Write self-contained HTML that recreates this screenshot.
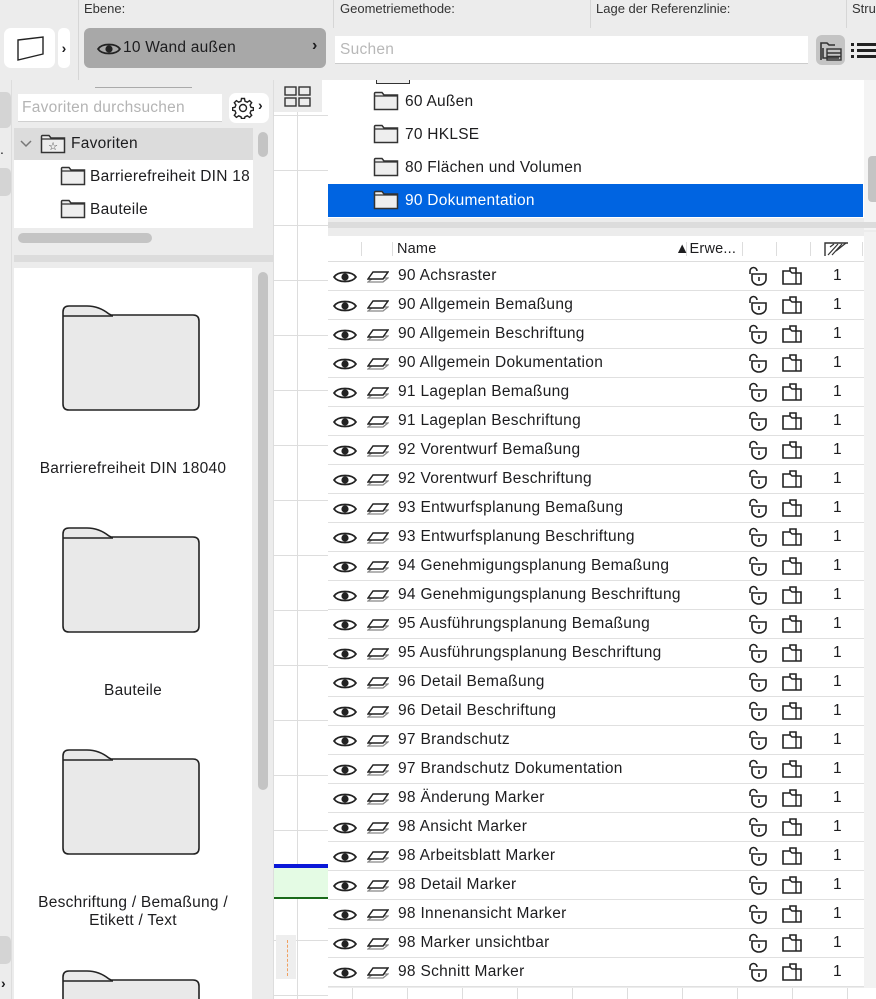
<!DOCTYPE html>
<html><head><meta charset="utf-8">
<style>
*{margin:0;padding:0;box-sizing:border-box}
html,body{width:876px;height:999px;overflow:hidden}
body{background:#ececec;font-family:"Liberation Sans",sans-serif;color:#1d1d1f;position:relative}
#w{position:absolute;left:0;top:0;width:876px;height:999px;overflow:hidden}
.a{position:absolute}
.lbl{font-size:13px;color:#333;top:1px}
.t{font-size:15.5px;letter-spacing:0.25px}
.row{position:absolute;left:328px;width:536px;height:29px;background:#fff;border-bottom:1px solid #e0e0e0}
.row .n{position:absolute;left:70px;top:5px;font-size:15.5px;letter-spacing:0.3px}
.row .one{position:absolute;left:505px;top:5px;font-size:15.5px}
.row svg{position:absolute}
</style></head><body><div id="w">
<svg width="0" height="0" style="position:absolute">
<defs>
<symbol id="eye" viewBox="0 0 24 14"><path d="M1 7C5 1 19 1 23 7C19 13 5 13 1 7Z" fill="none" stroke="#222" stroke-width="1.7"/><circle cx="12" cy="7" r="3.6" fill="#222"/></symbol>
<symbol id="lay" viewBox="0 0 22 14"><path d="M1 12L6 8H21L16 12Z" fill="none" stroke="#888" stroke-width="1.3"/><path d="M1 9L6 2H21L16 9Z" fill="#fff" stroke="#222" stroke-width="1.5"/></symbol>
<symbol id="lock" viewBox="0 0 22 20"><path d="M4 8V5A3.5 3.5 0 0 1 11 5" fill="none" stroke="#222" stroke-width="1.6"/><path d="M6 8H20V13A7 6 0 0 1 6 13Z" fill="none" stroke="#222" stroke-width="1.6"/><line x1="13" y1="11" x2="13" y2="15" stroke="#222" stroke-width="1.6"/></symbol>
<symbol id="doc" viewBox="0 0 22 20"><path d="M2 5H9V2H15V7H20V18H2Z" fill="none" stroke="#222" stroke-width="1.6"/><path d="M9 5L11 7H15M15 7V18" fill="none" stroke="#222" stroke-width="1.4"/></symbol>
<symbol id="fold" viewBox="0 0 26 20"><path d="M1.5 5V2.5A1 1 0 0 1 2.5 1.5H9L11 4H24.5V18.5H1.5Z" fill="#eee" stroke="#333" stroke-width="1.5"/><line x1="1.5" y1="5" x2="24.5" y2="5" stroke="#333" stroke-width="1.2"/></symbol>
<symbol id="bigf" viewBox="0 0 140 108"><path d="M2 14V8Q2 2 8 2H26Q38 2 48 10L50 11H132Q138 11 138 17V100Q138 106 132 106H8Q2 106 2 100Z" fill="#e9e9e9" stroke="#222" stroke-width="1.6"/><path d="M2 12H52" stroke="#222" stroke-width="1.4"/></symbol>
</defs></svg>

<div class="a" style="left:78px;top:0;width:1px;height:80px;background:#d6d6d6"></div>
<div class="a" style="left:333px;top:0;width:1px;height:28px;background:#d6d6d6"></div>
<div class="a" style="left:590px;top:0;width:1px;height:28px;background:#d6d6d6"></div>
<div class="a" style="left:846px;top:0;width:1px;height:28px;background:#d6d6d6"></div>
<div class="a lbl" style="left:84px">Ebene:</div>
<div class="a lbl" style="left:340px">Geometriemethode:</div>
<div class="a lbl" style="left:596px">Lage der Referenzlinie:</div>
<div class="a lbl" style="left:852px">Stru</div>
<div class="a" style="left:4px;top:28px;width:51px;height:40px;background:#fff;border-radius:7px"></div>
<svg class="a" style="left:16px;top:35px" width="30" height="27"><path d="M2 5L27 2V19L2 25Z" fill="none" stroke="#222" stroke-width="1.4"/></svg>
<div class="a" style="left:58px;top:28px;width:12px;height:40px;background:#fff;border-radius:5px;font-size:14px;font-weight:bold;text-align:center;line-height:40px">›</div>
<div class="a" style="left:84px;top:28px;width:242px;height:40px;background:#a8a8a8;border-radius:6px"></div>
<svg class="a" style="left:97px;top:42px" width="24" height="14"><use href="#eye"/></svg>
<div class="a t" style="left:123px;top:39px">10 Wand außen</div>
<div class="a" style="left:312px;top:37px;font-size:16px;font-weight:bold">›</div>
<div class="a" style="left:335px;top:36px;width:473px;height:28px;background:#fff;border-bottom:1px solid #ccc"></div>
<div class="a t" style="left:340px;top:41px;color:#b8b8b8">Suchen</div>
<div class="a" style="left:816px;top:35px;width:29px;height:30px;background:#c4c4c4;border-radius:6px"></div>
<svg class="a" style="left:819px;top:40px" width="24" height="22"><path d="M2 20V3H8L10 5H16M4 8V18H20" fill="none" stroke="#333" stroke-width="1.6"/><rect x="8" y="9" width="14" height="11" fill="none" stroke="#333" stroke-width="1.4"/><path d="M8 13H22M8 16.5H22" stroke="#333" stroke-width="1.4"/></svg>
<svg class="a" style="left:850px;top:41px" width="26" height="18"><g fill="#222"><rect x="1" y="2" width="3" height="3"/><rect x="1" y="8" width="3" height="3"/><rect x="1" y="14" width="3" height="3"/><rect x="7" y="2" width="19" height="3"/><rect x="7" y="8" width="19" height="3"/><rect x="7" y="14" width="19" height="3"/></g></svg>

<div class="a" style="left:0;top:80px;width:12px;height:919px;background:#ececec;border-right:1px solid #ddd"></div>
<div class="a" style="left:0;top:92px;width:11px;height:36px;background:#d4d4d4;border-radius:0 5px 5px 0"></div>
<div class="a" style="left:0;top:168px;width:11px;height:28px;background:#d4d4d4;border-radius:0 5px 5px 0"></div>
<div class="a" style="left:0;top:936px;width:11px;height:28px;background:#d4d4d4;border-radius:0 5px 5px 0"></div>
<div class="a" style="left:0;top:141px;font-size:14px">.</div>
<div class="a" style="left:1px;top:975px;font-size:14px;font-weight:bold">›</div>

<div class="a" style="left:95px;top:87px;width:97px;height:1px;background:#aaa"></div>
<div class="a" style="left:18px;top:94px;width:204px;height:28px;background:#fff;border-bottom:1px solid #d0d0d0"></div>
<div class="a t" style="left:22px;top:99px;color:#b4b4b4">Favoriten durchsuchen</div>
<div class="a" style="left:229px;top:93px;width:40px;height:30px;background:#fff;border-radius:7px"></div>
<svg class="a" style="left:232px;top:97px" width="22" height="22" viewBox="0 0 22 22"><g fill="none" stroke="#222" stroke-width="1.4"><circle cx="11" cy="11" r="3.5"/><path d="M9.5 1.5H12.5L13 4.2L15.3 5.2L17.6 3.6L19.7 5.7L18.1 8L19 10.3L21.5 10.8V13.2L19 13.7L18.1 16L19.7 18.3L17.6 20.4L15.3 18.8L13 19.8L12.5 21.5H9.5L9 19.8L6.7 18.8L4.4 20.4L2.3 18.3L3.9 16L3 13.7L0.5 13.2V10.8L3 10.3L3.9 8L2.3 5.7L4.4 3.6L6.7 5.2L9 4.2Z"/></g></svg>
<div class="a" style="left:258px;top:97px;font-size:14px;font-weight:bold">›</div>
<div class="a" style="left:14px;top:128px;width:239px;height:100px;background:#fff"></div>
<div class="a" style="left:14px;top:128px;width:239px;height:32px;background:#dcdcdc"></div>
<svg class="a" style="left:20px;top:140px" width="12" height="8"><path d="M1 1L6 6L11 1" fill="none" stroke="#777" stroke-width="1.5"/></svg>
<svg class="a" style="left:40px;top:134px" width="26" height="20"><use href="#fold"/><text x="13" y="16" font-size="11" text-anchor="middle" fill="#333">☆</text></svg>
<div class="a t" style="left:71px;top:135px">Favoriten</div>
<svg class="a" style="left:60px;top:166px" width="26" height="20"><use href="#fold"/></svg>
<div class="a t" style="left:90px;top:168px;white-space:nowrap;width:162px;overflow:hidden">Barrierefreiheit DIN 18</div>
<svg class="a" style="left:60px;top:199px" width="26" height="20"><use href="#fold"/></svg>
<div class="a t" style="left:90px;top:201px">Bauteile</div>
<div class="a" style="left:258px;top:132px;width:10px;height:25px;background:#c4c4c4;border-radius:5px"></div>
<div class="a" style="left:18px;top:233px;width:134px;height:10px;background:#c4c4c4;border-radius:5px"></div>
<div class="a" style="left:14px;top:255px;width:259px;height:7px;background:#dcdcdc"></div>
<div class="a" style="left:14px;top:268px;width:238px;height:731px;background:#fff;overflow:hidden">
<svg class="a" style="left:47px;top:36px" width="140" height="108"><use href="#bigf"/></svg>
<div class="a t" style="left:0;top:192px;width:238px;text-align:center">Barrierefreiheit DIN 18040</div>
<svg class="a" style="left:47px;top:258px" width="140" height="108"><use href="#bigf"/></svg>
<div class="a t" style="left:0;top:414px;width:238px;text-align:center">Bauteile</div>
<svg class="a" style="left:47px;top:480px" width="140" height="108"><use href="#bigf"/></svg>
<div class="a t" style="left:0;top:626px;width:238px;text-align:center;line-height:18px">Beschriftung / Bemaßung /<br>Etikett / Text</div>
<svg class="a" style="left:47px;top:701px" width="140" height="108"><use href="#bigf"/></svg>
</div>
<div class="a" style="left:258px;top:272px;width:10px;height:518px;background:#c4c4c4;border-radius:5px"></div>

<div class="a" style="left:273px;top:80px;width:55px;height:919px;background:#fff;border-left:1px solid #ddd;
background-image:linear-gradient(#ddd 1px,transparent 1px);background-size:100% 55px;background-position:0 35px"></div>
<div class="a" style="left:297px;top:80px;width:1px;height:919px;background:#ddd"></div>
<div class="a" style="left:274px;top:80px;width:48px;height:32px;background:#ececec"></div>
<svg class="a" style="left:284px;top:86px" width="28" height="22"><g fill="none" stroke="#333" stroke-width="1.4"><rect x="1" y="1" width="11" height="8"/><rect x="15" y="1" width="11" height="8"/><rect x="1" y="12" width="11" height="8"/><rect x="15" y="12" width="11" height="8"/></g></svg>
<div class="a" style="left:274px;top:864px;width:54px;height:4px;background:#0a18d8"></div>
<div class="a" style="left:274px;top:868px;width:54px;height:29px;background:#e4fbe4"></div>
<div class="a" style="left:274px;top:897px;width:54px;height:2px;background:#1a6a1a"></div>
<div class="a" style="left:276px;top:935px;width:20px;height:44px;background:#eee"></div>
<div class="a" style="left:287px;top:940px;width:0;height:36px;border-left:1px dashed #f0a060"></div>

<div class="a" style="left:328px;top:80px;width:536px;height:138px;background:#fff"></div>
<div class="a" style="left:376px;top:80px;width:34px;height:4px;border:1.4px solid #333;border-top:none;background:#eee"></div>
<svg class="a" style="left:373px;top:91px" width="26" height="20"><use href="#fold"/></svg>
<div class="a t" style="left:405px;top:93px">60 Außen</div>
<svg class="a" style="left:373px;top:124px" width="26" height="20"><use href="#fold"/></svg>
<div class="a t" style="left:405px;top:126px">70 HKLSE</div>
<svg class="a" style="left:373px;top:157px" width="26" height="20"><use href="#fold"/></svg>
<div class="a t" style="left:405px;top:159px">80 Flächen und Volumen</div>
<div class="a" style="left:328px;top:184px;width:535px;height:33px;background:#0064e1"></div>
<svg class="a" style="left:373px;top:190px" width="26" height="20"><use href="#fold"/></svg>
<div class="a t" style="left:405px;top:192px;color:#fff">90 Dokumentation</div>
<div class="a" style="left:864px;top:80px;width:12px;height:150px;background:#f4f4f4"></div>
<div class="a" style="left:868px;top:156px;width:8px;height:46px;background:#c4c4c4;border-radius:4px 0 0 4px"></div>
<div class="a" style="left:328px;top:222px;width:548px;height:6px;background:#dcdcdc"></div>

<div class="a" style="left:328px;top:236px;width:536px;height:26px;background:#fff;border-bottom:1px solid #ddd"></div>
<div class="a" style="left:361px;top:242px;width:1px;height:14px;background:#ddd"></div>
<div class="a" style="left:392px;top:242px;width:1px;height:14px;background:#ddd"></div>
<div class="a" style="left:686px;top:242px;width:1px;height:14px;background:#ddd"></div>
<div class="a" style="left:742px;top:242px;width:1px;height:14px;background:#ddd"></div>
<div class="a" style="left:776px;top:242px;width:1px;height:14px;background:#ddd"></div>
<div class="a" style="left:810px;top:242px;width:1px;height:14px;background:#ddd"></div>
<div class="a" style="left:862px;top:242px;width:1px;height:14px;background:#ddd"></div>
<div class="a" style="left:397px;top:241px;font-size:14.5px;letter-spacing:0.2px">Name</div>
<div class="a" style="left:675px;top:241px;font-size:14.5px;letter-spacing:0.2px">▲Erwe...</div>
<svg class="a" style="left:824px;top:241px" width="26" height="16"><path d="M1 15V2H24" fill="none" stroke="#333" stroke-width="1.4"/><path d="M4 14L14 3M8 14L18 3M12 10L22 2M6 6L10 3" stroke="#333" stroke-width="1.2"/></svg>

<div class="a" style="left:864px;top:232px;width:12px;height:767px;background:#f2f2f2"></div>

<div class="row" style="top:262px"><svg style="left:5px;top:8px" width="24" height="14"><use href="#eye"/></svg><svg style="left:39px;top:8px" width="22" height="14"><use href="#lay"/></svg><span class="n">90 Achsraster</span><svg style="left:418px;top:4px" width="22" height="20"><use href="#lock"/></svg><svg style="left:453px;top:4px" width="22" height="20"><use href="#doc"/></svg><span class="one">1</span></div>
<div class="row" style="top:291px"><svg style="left:5px;top:8px" width="24" height="14"><use href="#eye"/></svg><svg style="left:39px;top:8px" width="22" height="14"><use href="#lay"/></svg><span class="n">90 Allgemein Bemaßung</span><svg style="left:418px;top:4px" width="22" height="20"><use href="#lock"/></svg><svg style="left:453px;top:4px" width="22" height="20"><use href="#doc"/></svg><span class="one">1</span></div>
<div class="row" style="top:320px"><svg style="left:5px;top:8px" width="24" height="14"><use href="#eye"/></svg><svg style="left:39px;top:8px" width="22" height="14"><use href="#lay"/></svg><span class="n">90 Allgemein Beschriftung</span><svg style="left:418px;top:4px" width="22" height="20"><use href="#lock"/></svg><svg style="left:453px;top:4px" width="22" height="20"><use href="#doc"/></svg><span class="one">1</span></div>
<div class="row" style="top:349px"><svg style="left:5px;top:8px" width="24" height="14"><use href="#eye"/></svg><svg style="left:39px;top:8px" width="22" height="14"><use href="#lay"/></svg><span class="n">90 Allgemein Dokumentation</span><svg style="left:418px;top:4px" width="22" height="20"><use href="#lock"/></svg><svg style="left:453px;top:4px" width="22" height="20"><use href="#doc"/></svg><span class="one">1</span></div>
<div class="row" style="top:378px"><svg style="left:5px;top:8px" width="24" height="14"><use href="#eye"/></svg><svg style="left:39px;top:8px" width="22" height="14"><use href="#lay"/></svg><span class="n">91 Lageplan Bemaßung</span><svg style="left:418px;top:4px" width="22" height="20"><use href="#lock"/></svg><svg style="left:453px;top:4px" width="22" height="20"><use href="#doc"/></svg><span class="one">1</span></div>
<div class="row" style="top:407px"><svg style="left:5px;top:8px" width="24" height="14"><use href="#eye"/></svg><svg style="left:39px;top:8px" width="22" height="14"><use href="#lay"/></svg><span class="n">91 Lageplan Beschriftung</span><svg style="left:418px;top:4px" width="22" height="20"><use href="#lock"/></svg><svg style="left:453px;top:4px" width="22" height="20"><use href="#doc"/></svg><span class="one">1</span></div>
<div class="row" style="top:436px"><svg style="left:5px;top:8px" width="24" height="14"><use href="#eye"/></svg><svg style="left:39px;top:8px" width="22" height="14"><use href="#lay"/></svg><span class="n">92 Vorentwurf Bemaßung</span><svg style="left:418px;top:4px" width="22" height="20"><use href="#lock"/></svg><svg style="left:453px;top:4px" width="22" height="20"><use href="#doc"/></svg><span class="one">1</span></div>
<div class="row" style="top:465px"><svg style="left:5px;top:8px" width="24" height="14"><use href="#eye"/></svg><svg style="left:39px;top:8px" width="22" height="14"><use href="#lay"/></svg><span class="n">92 Vorentwurf Beschriftung</span><svg style="left:418px;top:4px" width="22" height="20"><use href="#lock"/></svg><svg style="left:453px;top:4px" width="22" height="20"><use href="#doc"/></svg><span class="one">1</span></div>
<div class="row" style="top:494px"><svg style="left:5px;top:8px" width="24" height="14"><use href="#eye"/></svg><svg style="left:39px;top:8px" width="22" height="14"><use href="#lay"/></svg><span class="n">93 Entwurfsplanung Bemaßung</span><svg style="left:418px;top:4px" width="22" height="20"><use href="#lock"/></svg><svg style="left:453px;top:4px" width="22" height="20"><use href="#doc"/></svg><span class="one">1</span></div>
<div class="row" style="top:523px"><svg style="left:5px;top:8px" width="24" height="14"><use href="#eye"/></svg><svg style="left:39px;top:8px" width="22" height="14"><use href="#lay"/></svg><span class="n">93 Entwurfsplanung Beschriftung</span><svg style="left:418px;top:4px" width="22" height="20"><use href="#lock"/></svg><svg style="left:453px;top:4px" width="22" height="20"><use href="#doc"/></svg><span class="one">1</span></div>
<div class="row" style="top:552px"><svg style="left:5px;top:8px" width="24" height="14"><use href="#eye"/></svg><svg style="left:39px;top:8px" width="22" height="14"><use href="#lay"/></svg><span class="n">94 Genehmigungsplanung Bemaßung</span><svg style="left:418px;top:4px" width="22" height="20"><use href="#lock"/></svg><svg style="left:453px;top:4px" width="22" height="20"><use href="#doc"/></svg><span class="one">1</span></div>
<div class="row" style="top:581px"><svg style="left:5px;top:8px" width="24" height="14"><use href="#eye"/></svg><svg style="left:39px;top:8px" width="22" height="14"><use href="#lay"/></svg><span class="n">94 Genehmigungsplanung Beschriftung</span><svg style="left:418px;top:4px" width="22" height="20"><use href="#lock"/></svg><svg style="left:453px;top:4px" width="22" height="20"><use href="#doc"/></svg><span class="one">1</span></div>
<div class="row" style="top:610px"><svg style="left:5px;top:8px" width="24" height="14"><use href="#eye"/></svg><svg style="left:39px;top:8px" width="22" height="14"><use href="#lay"/></svg><span class="n">95 Ausführungsplanung Bemaßung</span><svg style="left:418px;top:4px" width="22" height="20"><use href="#lock"/></svg><svg style="left:453px;top:4px" width="22" height="20"><use href="#doc"/></svg><span class="one">1</span></div>
<div class="row" style="top:639px"><svg style="left:5px;top:8px" width="24" height="14"><use href="#eye"/></svg><svg style="left:39px;top:8px" width="22" height="14"><use href="#lay"/></svg><span class="n">95 Ausführungsplanung Beschriftung</span><svg style="left:418px;top:4px" width="22" height="20"><use href="#lock"/></svg><svg style="left:453px;top:4px" width="22" height="20"><use href="#doc"/></svg><span class="one">1</span></div>
<div class="row" style="top:668px"><svg style="left:5px;top:8px" width="24" height="14"><use href="#eye"/></svg><svg style="left:39px;top:8px" width="22" height="14"><use href="#lay"/></svg><span class="n">96 Detail Bemaßung</span><svg style="left:418px;top:4px" width="22" height="20"><use href="#lock"/></svg><svg style="left:453px;top:4px" width="22" height="20"><use href="#doc"/></svg><span class="one">1</span></div>
<div class="row" style="top:697px"><svg style="left:5px;top:8px" width="24" height="14"><use href="#eye"/></svg><svg style="left:39px;top:8px" width="22" height="14"><use href="#lay"/></svg><span class="n">96 Detail Beschriftung</span><svg style="left:418px;top:4px" width="22" height="20"><use href="#lock"/></svg><svg style="left:453px;top:4px" width="22" height="20"><use href="#doc"/></svg><span class="one">1</span></div>
<div class="row" style="top:726px"><svg style="left:5px;top:8px" width="24" height="14"><use href="#eye"/></svg><svg style="left:39px;top:8px" width="22" height="14"><use href="#lay"/></svg><span class="n">97 Brandschutz</span><svg style="left:418px;top:4px" width="22" height="20"><use href="#lock"/></svg><svg style="left:453px;top:4px" width="22" height="20"><use href="#doc"/></svg><span class="one">1</span></div>
<div class="row" style="top:755px"><svg style="left:5px;top:8px" width="24" height="14"><use href="#eye"/></svg><svg style="left:39px;top:8px" width="22" height="14"><use href="#lay"/></svg><span class="n">97 Brandschutz Dokumentation</span><svg style="left:418px;top:4px" width="22" height="20"><use href="#lock"/></svg><svg style="left:453px;top:4px" width="22" height="20"><use href="#doc"/></svg><span class="one">1</span></div>
<div class="row" style="top:784px"><svg style="left:5px;top:8px" width="24" height="14"><use href="#eye"/></svg><svg style="left:39px;top:8px" width="22" height="14"><use href="#lay"/></svg><span class="n">98 Änderung Marker</span><svg style="left:418px;top:4px" width="22" height="20"><use href="#lock"/></svg><svg style="left:453px;top:4px" width="22" height="20"><use href="#doc"/></svg><span class="one">1</span></div>
<div class="row" style="top:813px"><svg style="left:5px;top:8px" width="24" height="14"><use href="#eye"/></svg><svg style="left:39px;top:8px" width="22" height="14"><use href="#lay"/></svg><span class="n">98 Ansicht Marker</span><svg style="left:418px;top:4px" width="22" height="20"><use href="#lock"/></svg><svg style="left:453px;top:4px" width="22" height="20"><use href="#doc"/></svg><span class="one">1</span></div>
<div class="row" style="top:842px"><svg style="left:5px;top:8px" width="24" height="14"><use href="#eye"/></svg><svg style="left:39px;top:8px" width="22" height="14"><use href="#lay"/></svg><span class="n">98 Arbeitsblatt Marker</span><svg style="left:418px;top:4px" width="22" height="20"><use href="#lock"/></svg><svg style="left:453px;top:4px" width="22" height="20"><use href="#doc"/></svg><span class="one">1</span></div>
<div class="row" style="top:871px"><svg style="left:5px;top:8px" width="24" height="14"><use href="#eye"/></svg><svg style="left:39px;top:8px" width="22" height="14"><use href="#lay"/></svg><span class="n">98 Detail Marker</span><svg style="left:418px;top:4px" width="22" height="20"><use href="#lock"/></svg><svg style="left:453px;top:4px" width="22" height="20"><use href="#doc"/></svg><span class="one">1</span></div>
<div class="row" style="top:900px"><svg style="left:5px;top:8px" width="24" height="14"><use href="#eye"/></svg><svg style="left:39px;top:8px" width="22" height="14"><use href="#lay"/></svg><span class="n">98 Innenansicht Marker</span><svg style="left:418px;top:4px" width="22" height="20"><use href="#lock"/></svg><svg style="left:453px;top:4px" width="22" height="20"><use href="#doc"/></svg><span class="one">1</span></div>
<div class="row" style="top:929px"><svg style="left:5px;top:8px" width="24" height="14"><use href="#eye"/></svg><svg style="left:39px;top:8px" width="22" height="14"><use href="#lay"/></svg><span class="n">98 Marker unsichtbar</span><svg style="left:418px;top:4px" width="22" height="20"><use href="#lock"/></svg><svg style="left:453px;top:4px" width="22" height="20"><use href="#doc"/></svg><span class="one">1</span></div>
<div class="row" style="top:958px"><svg style="left:5px;top:8px" width="24" height="14"><use href="#eye"/></svg><svg style="left:39px;top:8px" width="22" height="14"><use href="#lay"/></svg><span class="n">98 Schnitt Marker</span><svg style="left:418px;top:4px" width="22" height="20"><use href="#lock"/></svg><svg style="left:453px;top:4px" width="22" height="20"><use href="#doc"/></svg><span class="one">1</span></div>
<div class="a" style="left:328px;top:988px;width:548px;height:11px;background:#fff;background-image:linear-gradient(90deg,#ddd 1px,transparent 1px);background-size:55px 100%;background-position:24px 0"></div>
</div></body></html>
